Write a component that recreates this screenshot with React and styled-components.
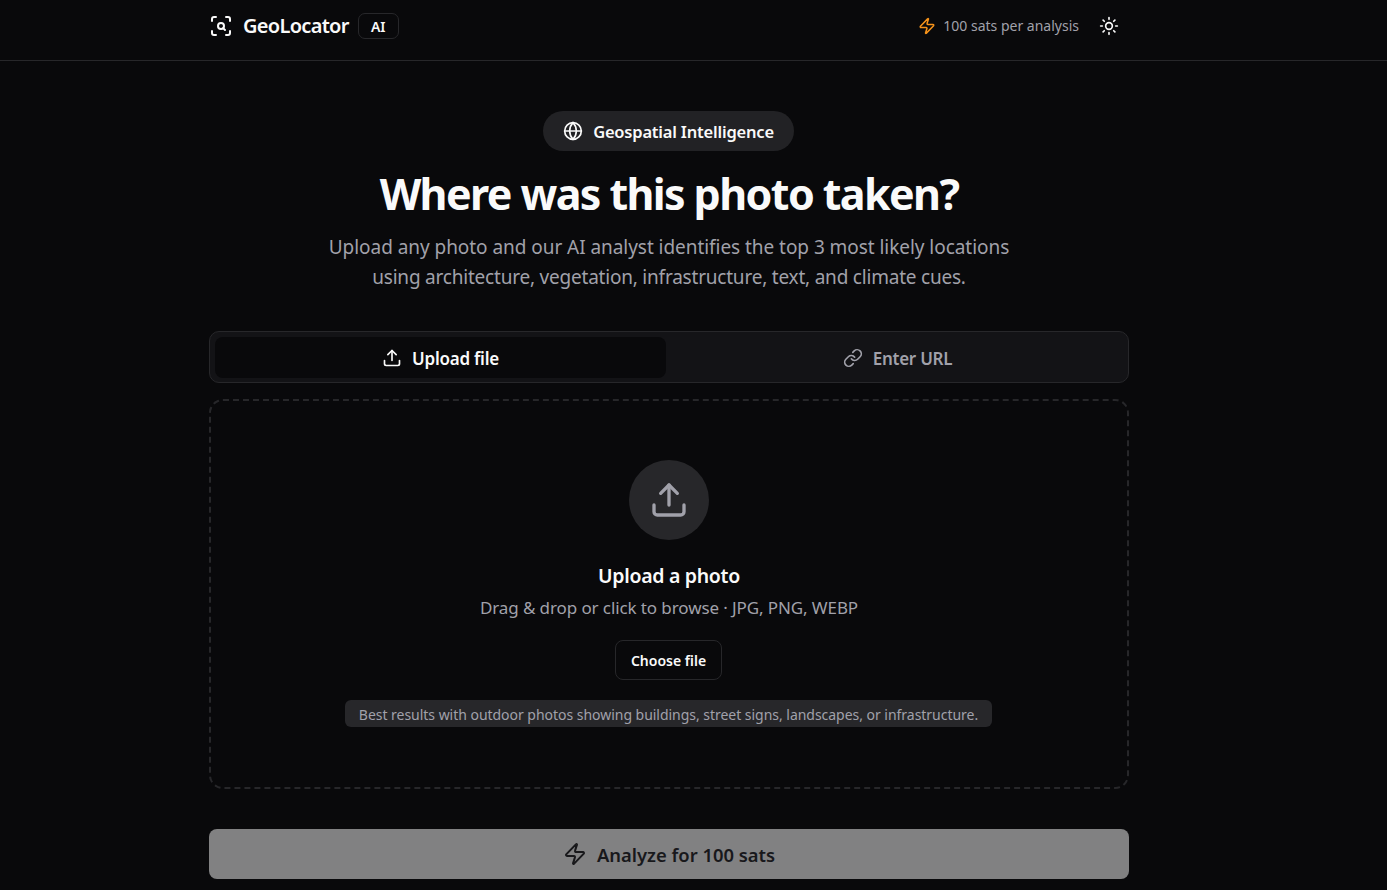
import styled, { createGlobalStyle } from "styled-components"
import { ScanSearch, Zap, Sun, Globe, Upload, Link } from "lucide-react"

const GlobalStyle = createGlobalStyle`
  html, body {
    margin: 0;
    background: #09090b;
    color: #fafafa;
    font-family: "Noto Sans", "Open Sans", sans-serif;
  }
  * { box-sizing: border-box; }
`

const Page = styled.div`
  padding-right: 49px;
`
const Header = styled.header`
  height: 61px;
  margin-right: -49px;
  padding-right: 49px;
  border-bottom: 1px solid #27272a;
`
const HeaderInner = styled.div`
  width: 920px;
  margin: 0 auto;
  height: 52px;
  display: flex;
  align-items: center;
  justify-content: space-between;
`
const Brand = styled.div`
  display: flex;
  align-items: center;
`
const BrandName = styled.span`
  margin-left: 10px;
  margin-bottom: 2px;
  font-size: 20px;
  font-weight: 600;
  letter-spacing: -0.7px;
`
const AiBadge = styled.span`
  margin-left: 9px;
  width: 41px;
  height: 26px;
  display: flex;
  align-items: center;
  justify-content: center;
  border: 1px solid #27272a;
  border-radius: 7px;
  font-size: 14px;
  font-weight: 600;
`
const HeaderRight = styled.div`
  display: flex;
  align-items: center;
  color: #a1a1aa;
  font-size: 14px;
`
const Sats = styled.span`
  margin-left: 7px;
  margin-right: 20px;
  margin-bottom: 2px;
`
const ThemeBtn = styled.span`
  display: flex;
  color: #fafafa;
  margin-right: 10px;
`
const Main = styled.main`
  width: 920px;
  margin: 0 auto;
  padding-top: 50px;
  display: flex;
  flex-direction: column;
  align-items: center;
`
const Pill = styled.div`
  height: 40px;
  width: 251px;
  margin-right: 1px;
  border-radius: 20px;
  background: #222225;
  display: flex;
  align-items: center;
  justify-content: center;
  gap: 10px;
  font-size: 16.5px;
  font-weight: 600;
  letter-spacing: -0.2px;
`
const Title = styled.h1`
  margin: 15px 0 0;
  font-size: 43px;
  line-height: 56px;
  font-weight: 700;
  letter-spacing: -1.6px;
`
const Sub = styled.p`
  margin: 10px 0 0;
  text-align: center;
  font-size: 19px;
  line-height: 30px;
  color: #a1a1aa;
`
const SubLine = styled.span`
  display: block;
  letter-spacing: ${(p) => p.$spacing};
`
const Tabs = styled.div`
  margin-top: 39px;
  width: 100%;
  height: 52px;
  padding: 5px;
  border: 1px solid #27272a;
  border-radius: 10px;
  background: #131316;
  display: grid;
  grid-template-columns: 1fr 1fr;
  gap: 6px;
`
const Tab = styled.div`
  display: flex;
  align-items: center;
  justify-content: center;
  gap: 10px;
  border-radius: 8px;
  height: 41px;
  font-size: 17px;
  font-weight: 600;
  letter-spacing: -0.25px;
  background: ${(p) => (p.$active ? "#09090b" : "transparent")};
  color: ${(p) => (p.$active ? "#fafafa" : "#a1a1aa")};
`
const TabLabel = styled.span`
  margin-top: 2px;
`
const Drop = styled.div`
  margin-top: 16px;
  width: 100%;
  height: 390px;
  border: 2px dashed #27272a;
  border-radius: 14px;
  padding-top: 59px;
  display: flex;
  flex-direction: column;
  align-items: center;
`
const Circle = styled.div`
  width: 80px;
  height: 80px;
  border-radius: 50%;
  background: #27272a;
  color: #a1a1aa;
  display: flex;
  align-items: center;
  justify-content: center;
`
const DropTitle = styled.div`
  margin-top: 22px;
  font-size: 19.5px;
  line-height: 28px;
  font-weight: 600;
  letter-spacing: -0.3px;
`
const DropText = styled.div`
  margin-top: 4px;
  font-size: 17px;
  line-height: 28px;
  letter-spacing: -0.1px;
  color: #a1a1aa;
`
const Choose = styled.button`
  margin-top: 18px;
  margin-right: 1px;
  width: 107px;
  height: 40px;
  border: 1px solid #27272a;
  border-radius: 8px;
  background: #09090b;
  color: #fafafa;
  font: 600 14px "Noto Sans", sans-serif;
`
const Hint = styled.div`
  margin-top: 20px;
  margin-right: 1px;
  height: 27px;
  width: 647px;
  text-align: center;
  border-radius: 6px;
  background: #27272a;
  color: #a1a1aa;
  font-size: 14px;
  line-height: 29px;
  letter-spacing: -0.03px;
`
const Analyze = styled.button`
  margin-top: 40px;
  width: 100%;
  height: 50px;
  border: 0;
  border-radius: 8px;
  background: #818182;
  color: #18181b;
  display: flex;
  align-items: center;
  justify-content: center;
  gap: 10px;
  font: 600 18.4px "Noto Sans", sans-serif;
`

export default function App() {
  return (
    <Page>
      <GlobalStyle />
      <Header>
        <HeaderInner>
          <Brand>
            <ScanSearch size={24} color="#fafafa" />
            <BrandName>GeoLocator</BrandName>
            <AiBadge>AI</AiBadge>
          </Brand>
          <HeaderRight>
            <Zap size={18} color="#f7931a" />
            <Sats>100 sats per analysis</Sats>
            <ThemeBtn><Sun size={20} /></ThemeBtn>
          </HeaderRight>
        </HeaderInner>
      </Header>
      <Main>
        <Pill><Globe size={20} />Geospatial Intelligence</Pill>
        <Title>Where was this photo taken?</Title>
        <Sub>
          <SubLine $spacing="-0.05px">Upload any photo and our AI analyst identifies the top 3 most likely locations</SubLine>
          <SubLine $spacing="-0.21px">using architecture, vegetation, infrastructure, text, and climate cues.</SubLine>
        </Sub>
        <Tabs>
          <Tab $active><Upload size={20} /><TabLabel>Upload file</TabLabel></Tab>
          <Tab><Link size={20} /><TabLabel>Enter URL</TabLabel></Tab>
        </Tabs>
        <Drop>
          <Circle><Upload size={40} /></Circle>
          <DropTitle>Upload a photo</DropTitle>
          <DropText>Drag &amp; drop or click to browse · JPG, PNG, WEBP</DropText>
          <Choose>Choose file</Choose>
          <Hint>Best results with outdoor photos showing buildings, street signs, landscapes, or infrastructure.</Hint>
        </Drop>
        <Analyze><Zap size={24} />Analyze for 100 sats</Analyze>
      </Main>
    </Page>
  )
}
